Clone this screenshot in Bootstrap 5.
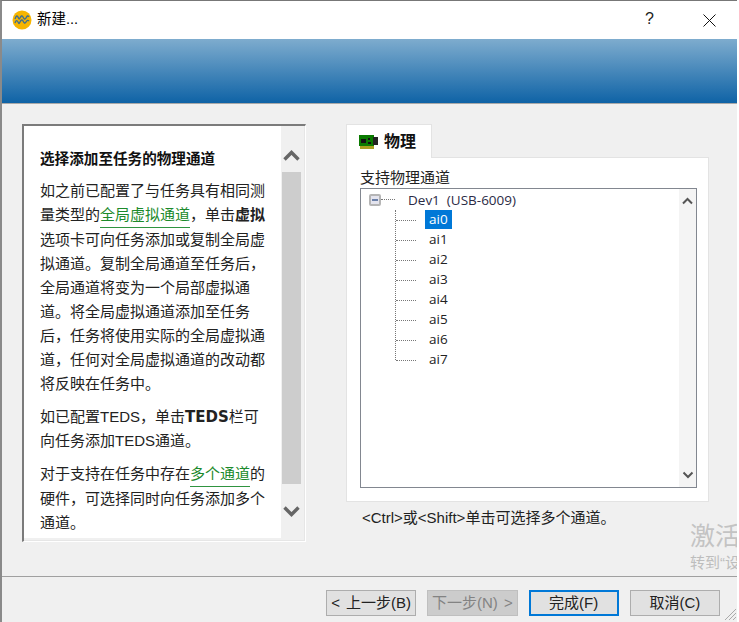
<!DOCTYPE html>
<html lang="zh">
<head>
<meta charset="utf-8">
<title>新建...</title>
<link href="https://cdn.jsdelivr.net/npm/bootstrap@5.3.0/dist/css/bootstrap.min.css" rel="stylesheet">
<style>
html,body{height:622px;overflow:hidden;background:#fff}
body{font-family:"Liberation Sans","Noto Sans CJK SC",sans-serif;font-size:15px;color:#111}
.dlg{width:737px;height:622px;border-left:2px solid #8a8a8a;border-top:1px solid #777;position:relative;background:#f0f0f0;overflow:hidden}
.ttl{height:38px;background:#fff;padding-left:10px;gap:5px}
.ttl-txt{font-size:14.500px;color:#000}
.ttl-help{position:absolute;left:643px;top:9px;font-size:16px;line-height:18px;color:#222}
.ttl-x{position:absolute;left:701px;top:13px}
.ban{height:65px;background:linear-gradient(#7eacce,#0f63a6);border-bottom:1px solid #a9a9a9}
.mid{height:472px;padding:20px 28px 0 20px;gap:40px}
.help{width:284px;height:418px;background:#f0f0f0;border:2px solid #7b7b7b;border-right:1px solid #fff;border-bottom:1px solid #fff;box-shadow:inset -1px -1px 0 #e6e6e6}
.help-body{width:257px;background:#fff;height:412px;padding:21px 12px 0 16px;font-size:15px;line-height:24px;color:#222}
.help-body p{margin:0 0 9px}
.help-body h6{font-size:14.600px;font-weight:700;line-height:24px;margin:0 0 8px;color:#111}
.tds{font-family:"DejaVu Sans",sans-serif;font-weight:700}
.glink{color:#1c8a2c;border-bottom:1px solid #2f9440;line-height:20px;display:inline-block;height:23px}
.sb{width:24px;height:100%;padding-top:24px}
.sb-thumb{width:19px;height:312px;background:#cdcdcd;margin:11px 0 0 1px}
.sb-arrow{display:block;margin-left:2px}
.sb-dn{margin-top:22px}
.right{width:363px}
.tab{width:86px;height:34px;background:#fff;border:1px solid #e3e3e3;border-bottom:0;padding-left:12px;gap:6px;font-weight:700;font-size:16px;margin-bottom:-1px;position:relative;z-index:1;color:#111}
.pane{height:345px;background:#fff;border:1px solid #e3e3e3;padding:10px 11px 0 13px}
.pane-lbl{line-height:20px;height:20px;color:#222;font-size:15px}
.lst{height:300px;border:1px solid #828790;padding-top:1px;position:relative}
.tree{font-family:"Open Sans","Noto Sans",sans-serif;font-size:13.500px;color:#2b2b45;line-height:20px;padding-left:8px}
.tree-row{height:20px}
.exp{width:12px;height:12px;border:2px solid #b5b5b5;background:#e4e4ee;border-radius:2px;flex:none}
.exp i{display:block;width:6px;height:1.500px;background:#6b80a8;margin:3px auto 0}
.h-dot{width:14px;height:10px;border-bottom:1px dotted #777;align-self:flex-start;flex:none}
.dev{margin-left:13px}
.kids{margin-left:26px;border-left:1px dotted #777;height:150px}
.kid{height:20px;color:#222}
.kid .h-dot{width:20px;height:11px;margin-right:9px}
.nm{padding:0 4px;line-height:19px;height:19px;display:block}
.sel{background:#0078d7;color:#fff}
.sb2{position:absolute;right:0;top:0;bottom:0;width:17px;background:#f4f4f4}
.hint{font-size:15px;color:#222;padding:6px 0 0 16px;line-height:20px}
.foot{height:45px;border-top:1px solid #a0a0a0;padding:13px 17px 0 324px;gap:11px;position:relative}
.wbtn{width:91px;height:26px;background:#e1e1e1;border:1px solid #adadad;border-radius:0;padding:0;font-size:15px;line-height:24px;color:#222;word-spacing:2px;font-family:"Liberation Sans","Noto Sans CJK SC",sans-serif}
.wbtn.off{background:#ccc;border-color:#bfbfbf;color:#838383;opacity:1}
.wbtn.def{border:2px solid #0078d7;line-height:22px}
.wm1{position:absolute;left:688px;top:519px;font-size:25px;line-height:32px;color:#c3c3c3;white-space:nowrap}
.wm2{position:absolute;left:688px;top:552px;font-size:15px;line-height:20px;color:#bdbdbd;white-space:nowrap}
.grip{position:absolute;right:0;bottom:0}
</style>
</head>
<body>
<div class="dlg">
  <div class="ttl d-flex align-items-center">
    <svg width="20" height="20" viewBox="0 0 20 20"><circle cx="10" cy="10" r="9.500" fill="#f7b500"/><path d="M3 9c1-3 2-4 3-2s1 3 2 1 2-3 3-1 2 3 3 1 2-3 3-1M3 13c1-3 2-3 3-1s1 2 2 0 2-3 3-1 2 3 3 1 2-2 3-1" fill="none" stroke="#3f6f8f" stroke-width="1.400"/></svg>
    <span class="ttl-txt">新建...</span>
  </div>
  <span class="ttl-help">?</span>
  <svg class="ttl-x" width="13" height="13" viewBox="0 0 13 13"><path d="M.5.5l12 12M12.500.5l-12 12" stroke="#111" stroke-width="1" fill="none"/></svg>
  <div class="ban"></div>
  <div class="mid d-flex">
    <div class="help d-flex">
      <div class="help-body">
        <h6>选择添加至任务的物理通道</h6>
        <p>如之前已配置了与任务具有相同测量类型的<span class="glink">全局虚拟通道</span>，单击<b>虚拟</b>选项卡可向任务添加或复制全局虚拟通道。复制全局通道至任务后，全局通道将变为一个局部虚拟通道。将全局虚拟通道添加至任务后，任务将使用实际的全局虚拟通道，任何对全局虚拟通道的改动都将反映在任务中。</p>
        <p>如已配置TEDS，单击<b class="tds">TEDS</b>栏可向任务添加TEDS通道。</p>
        <p>对于支持在任务中存在<span class="glink">多个通道</span>的硬件，可选择同时向任务添加多个通道。</p>
      </div>
      <div class="sb">
        <svg class="sb-arrow" width="17" height="11" viewBox="0 0 17 11"><path d="M1.500 9.500L8.500 2.500l7 7" fill="none" stroke="#666" stroke-width="3.400"/></svg>
        <div class="sb-thumb"></div>
        <svg class="sb-arrow sb-dn" width="17" height="11" viewBox="0 0 17 11"><path d="M1.500 1.500L8.500 8.500l7-7" fill="none" stroke="#666" stroke-width="3.400"/></svg>
      </div>
    </div>
    <div class="right">
      <div class="tab d-flex align-items-center">
        <svg width="19" height="14" viewBox="0 0 19 14"><rect width="15" height="11" fill="#0a7a00"/><rect y="11" x="1" width="14" height="3" fill="#a8a020"/><rect x="2" y="4" width="5" height="4" fill="#111"/><rect x="9" y="3" width="2" height="2" fill="#111"/><rect x="9" y="7" width="3" height="2" fill="#111"/><rect x="14" y="2" width="5" height="8" fill="#222"/></svg>
        <span>物理</span>
      </div>
      <div class="pane">
        <div class="pane-lbl">支持物理通道</div>
        <div class="lst">
          <div class="tree">
            <div class="tree-row d-flex align-items-center"><span class="exp"><i></i></span><span class="h-dot"></span><span class="dev">Dev1&nbsp; (USB-6009)</span></div>
            <div class="kids">
              <div class="kid d-flex"><span class="h-dot"></span><span class="nm sel">ai0</span></div>
              <div class="kid d-flex"><span class="h-dot"></span><span class="nm">ai1</span></div>
              <div class="kid d-flex"><span class="h-dot"></span><span class="nm">ai2</span></div>
              <div class="kid d-flex"><span class="h-dot"></span><span class="nm">ai3</span></div>
              <div class="kid d-flex"><span class="h-dot"></span><span class="nm">ai4</span></div>
              <div class="kid d-flex"><span class="h-dot"></span><span class="nm">ai5</span></div>
              <div class="kid d-flex"><span class="h-dot"></span><span class="nm">ai6</span></div>
              <div class="kid d-flex"><span class="h-dot"></span><span class="nm">ai7</span></div>
            </div>
          </div>
          <div class="sb2">
            <svg class="d-block mx-auto mt-2" width="11" height="8" viewBox="0 0 11 8"><path d="M1 6.500L5.500 2 10 6.500" fill="none" stroke="#555" stroke-width="2"/></svg>
            <svg class="position-absolute bottom-0 mb-2 start-50 translate-middle-x" width="11" height="8" viewBox="0 0 11 8"><path d="M1 1.500L5.500 6 10 1.500" fill="none" stroke="#555" stroke-width="2"/></svg>
          </div>
        </div>
      </div>
      <div class="hint">&lt;Ctrl&gt;或&lt;Shift&gt;单击可选择多个通道。</div>
    </div>
  </div>
  <div class="foot d-flex align-items-start">
    <button class="btn wbtn" type="button">&lt; 上一步(B)</button>
    <button class="btn wbtn off" type="button" disabled>下一步(N) &gt;</button>
    <button class="btn wbtn def" type="button">完成(F)</button>
    <button class="btn wbtn" type="button">取消(C)</button>
    <svg class="grip" width="14" height="14" viewBox="0 0 14 14"><path d="M13 2L2 13M13 6L6 13M13 10l-3 3" stroke="#aaa" fill="none"/></svg>
  </div>
  <div class="wm1">激活</div>
  <div class="wm2">转到“设</div>
</div>
<script src="https://cdn.jsdelivr.net/npm/bootstrap@5.3.0/dist/js/bootstrap.bundle.min.js"></script>
</body>
</html>
